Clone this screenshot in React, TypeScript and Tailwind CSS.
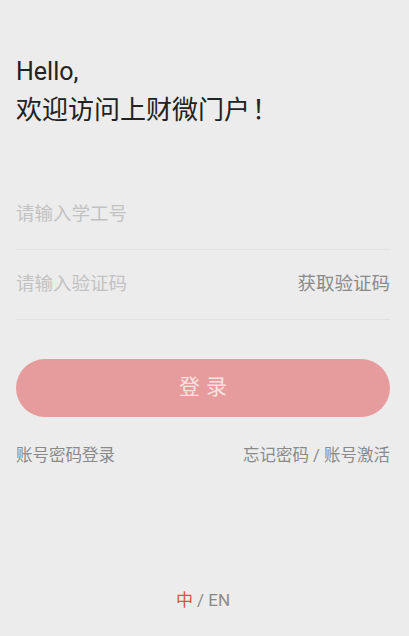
import { useState } from 'react';

export default function App() {
  const [lang] = useState<'zh' | 'en'>('zh');

  return (
    <div
      className="min-h-[636px] h-[636px] bg-[#ececec] flex flex-col pl-4 pr-[19px]"
      style={{ fontFamily: 'Roboto, "Noto Sans CJK SC", sans-serif' }}
    >
      {/* Greeting */}
      <div className="pt-[54px] text-[#222]">
        <div className="text-[25px] leading-[36px]">Hello,</div>
        <div className="text-[26px] leading-[36px] mt-[2px]">
          欢迎访问上财微门户<span className="ml-[2px]">！</span>
        </div>
      </div>

      {/* Form */}
      <div className="mt-[52px]">
        <div className="h-[70px] flex items-center border-b border-[#e2e2e2]">
          <input
            className="flex-1 bg-transparent outline-none text-[18.5px] text-[#333] placeholder:text-[#c2c2c2]"
            placeholder="请输入学工号"
          />
        </div>
        <div className="h-[70px] flex items-center border-b border-[#e2e2e2]">
          <input
            className="flex-1 min-w-0 bg-transparent outline-none text-[18.5px] text-[#333] placeholder:text-[#c2c2c2]"
            placeholder="请输入验证码"
          />
          <button className="text-[18.5px] text-[#8a8a8a] shrink-0">获取验证码</button>
        </div>
      </div>

      <button className="mt-[39px] h-[58px] rounded-full bg-[#e69c9c] text-[#f7e2e2] text-[21px] tracking-[6px] pl-[6px]">
        登录
      </button>

      <div className="mt-[28px] flex justify-between text-[16.5px] leading-[22px] text-[#8a8a8a]">
        <span>账号密码登录</span>
        <span>忘记密码 / 账号激活</span>
      </div>

      <div className="mt-auto pb-[25px] text-center text-[17px] leading-[22px] text-[#8a8a8a]">
        <span className={lang === 'zh' ? 'text-[#e24c4c]' : ''}>中</span>
        <span> / </span>
        <span className={lang === 'en' ? 'text-[#e24c4c]' : ''}>EN</span>
      </div>
    </div>
  );
}
